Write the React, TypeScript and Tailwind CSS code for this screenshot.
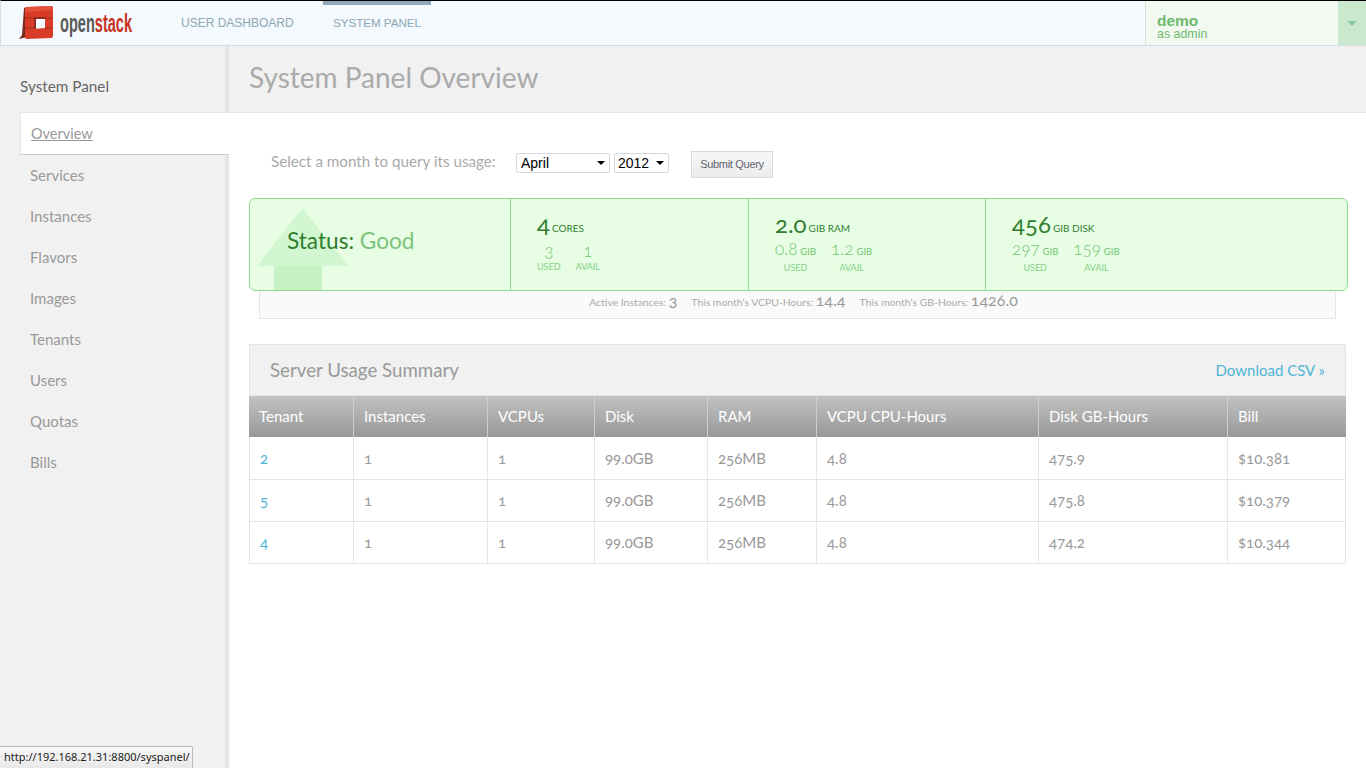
const BODY_FONT = "font-['Lato','Noto_Sans',sans-serif]";

const NAV_ITEMS = ["Services", "Instances", "Flavors", "Images", "Tenants", "Users", "Quotas", "Bills"];

const COLUMNS = [
  { label: "Tenant", width: "w-[104px]" },
  { label: "Instances", width: "w-[134px]" },
  { label: "VCPUs", width: "w-[107px]" },
  { label: "Disk", width: "w-[113px]" },
  { label: "RAM", width: "w-[109px]" },
  { label: "VCPU CPU-Hours", width: "w-[222px]" },
  { label: "Disk GB-Hours", width: "w-[189px]" },
  { label: "Bill", width: "w-[119px]" },
];

const ROWS = [
  ["2", "1", "1", "99.0GB", "256MB", "4.8", "475.9", "$10.381"],
  ["5", "1", "1", "99.0GB", "256MB", "4.8", "475.8", "$10.379"],
  ["4", "1", "1", "99.0GB", "256MB", "4.8", "474.2", "$10.344"],
];

function Logo() {
  return (
    <div className="flex items-center">
      <svg width="38" height="36" viewBox="0 1 38 36" className="shrink-0">
        {/* dark side of the cube */}
        <path d="M6 4 L9 3 L9 33 L1 35 L4 31 Z" fill="#7a2b20" />
        {/* front face with square hole */}
        <path fillRule="evenodd" d="M7 5 Q7 3 9 3 L33 2 Q35 2 35 4 L35 32 Q35 34 33 34 L9 35 Q7 35 7 33 Z M16 13 L16 25 L27 24 L27 13 Z" fill="#d83b27" />
        <path d="M7 5 Q7 3 9 3 L33 2 Q35 2 35 4 L35 6 L7 8 Z" fill="#e4503c" />
        {/* inner depth of the hole */}
        <path d="M16 13 L27 13 L27 15 L18 15 L18 25 L16 25 Z" fill="#8f2a1c" />
        {/* seams */}
        <path d="M7 14 L16 14 M27 14 L35 14 M7 24 L16 24 M27 24 L35 24" stroke="#9b2a1b" strokeWidth="1" />
      </svg>
      <span className="ml-[4px] inline-block origin-left scale-x-[0.56] font-['Liberation_Sans',sans-serif] text-[26px] leading-none font-bold whitespace-nowrap">
        <span className="text-[#5a5a5a]">open</span>
        <span className="text-[#c8321f]">stack</span>
      </span>
    </div>
  );
}

function Header() {
  return (
    <header className="flex h-[46px] border-t border-b border-l border-t-black border-b-[#cfdde6] border-l-[#cfdde6] bg-[#f3f9fd] font-['Liberation_Sans',sans-serif]">
      <div className="flex w-[180px] shrink-0 items-center pl-[17px]">
        <Logo />
      </div>
      <nav className="flex flex-1 text-[12px] text-[#8ea7b5]">
        <a className="flex w-[142px] items-center">USER DASHBOARD</a>
        <a className="flex w-[108px] items-center justify-center border-t-[4px] border-[#8faab8] pb-[4px] text-[11.6px]">SYSTEM PANEL</a>
      </nav>
      <div className="flex w-[221px] shrink-0 border-l border-[#d5e0dc] bg-[#f2f9f1]">
        <div className="flex-1 pt-[13px] pl-[11px] text-[#6fb96f]">
          <div className="text-[15.5px] leading-[14px] font-bold">demo</div>
          <div className="text-[12.4px] leading-[13px]">as admin</div>
        </div>
        <div className="flex w-[28px] items-center justify-center bg-[#c9e8ce]">
          <span className="h-0 w-0 border-x-[5px] border-t-[5px] border-x-transparent border-t-[#8fc495]" />
        </div>
      </div>
    </header>
  );
}

function Sidebar() {
  return (
    <aside className={`relative z-10 w-[225px] shrink-0 bg-[#f1f1f1] ${BODY_FONT}`}>
      <h4 className="pt-[30px] pl-[20px] text-[15.3px] leading-[20px] text-[#666666]">System Panel</h4>
      <ul className="mt-[16px] text-[15px] text-[#999999]">
        <li className="-mr-[4px] ml-[20px] flex h-[43px] items-center border-t border-b border-l border-t-[#e5e5e5] border-b-[#cccccc] border-l-[#e5e5e5] bg-white pl-[10px]">
          <a className="text-[14.5px] underline">Overview</a>
        </li>
        {NAV_ITEMS.map((item) => (
          <li key={item} className="flex h-[41px] items-center pl-[30px]">
            <a>{item}</a>
          </li>
        ))}
      </ul>
    </aside>
  );
}

function QueryForm() {
  return (
    <form className="flex items-start pt-[38px] pl-[42px]">
      <label className="w-[245px] text-[15.2px] leading-[20px] text-[#aaaaaa]">Select a month to query its usage:</label>
      <div className="relative mt-[2px] flex h-[20px] w-[94px] items-center rounded-[2px] border border-[#d5dae0] bg-white pl-[4px] font-['Liberation_Sans',sans-serif] text-[14px] text-black">
        April
        <span className="absolute top-[7px] right-[4px] h-0 w-0 border-x-[4px] border-t-[4px] border-x-transparent border-t-black" />
      </div>
      <div className="relative mt-[2px] ml-[4px] flex h-[20px] w-[55px] items-center rounded-[2px] border border-[#d5dae0] bg-white pl-[3px] font-['Liberation_Sans',sans-serif] text-[14px] text-black">
        2012
        <span className="absolute top-[7px] right-[4px] h-0 w-0 border-x-[4px] border-t-[4px] border-x-transparent border-t-black" />
      </div>
      <button type="button" className="ml-[22px] h-[27px] w-[82px] border border-[#d9d9d9] bg-gradient-to-b from-[#f7f7f7] to-[#ececec] font-['Liberation_Sans',sans-serif] text-[11px] tracking-[-0.3px] text-[#5f5f6f]">
        Submit Query
      </button>
    </form>
  );
}

function Stat({ value, unit, label }: { value: string; unit?: string; label: string }) {
  return (
    <div className="flex flex-col items-center">
      <div className="text-[17px] leading-[19px] font-light text-[#6fc46f] oldstyle-nums">
        {value}
        {unit && <span className="ml-[3px] text-[9.5px] font-normal">{unit}</span>}
      </div>
      <div className="text-[9px] leading-[13px] text-[#86cf86]">{label}</div>
    </div>
  );
}

function StatCell({ total, unit, used, avail, unitSmall, width, gap }: { total: string; unit: string; used: string; avail: string; unitSmall?: string; width: string; gap: string }) {
  return (
    <div className={`${width} shrink-0 border-l border-[#8fdc8f] pt-[11px] pl-[26px]`}>
      <div className="flex items-baseline text-[#2f7d2f]">
        <span className="text-[24px] leading-[28px] oldstyle-nums">{total}</span>
        <span className="ml-[2px] -translate-y-px text-[10px]">{unit}</span>
      </div>
      <div className={`flex ${gap}`}>
        <Stat value={used} unit={unitSmall} label="USED" />
        <Stat value={avail} unit={unitSmall} label="AVAIL" />
      </div>
    </div>
  );
}

function StatusBar() {
  return (
    <section className="mt-[20px] ml-[20px] w-[1099px]">
      <div className="relative flex h-[93px] overflow-hidden rounded-[6px] border border-[#8fdc8f] bg-[#e7fde4]">
        <svg width="91" height="82" viewBox="0 0 91 82" className="absolute bottom-0 left-[7px]">
          <path d="M45.5 0 L91 58 L0 58 Z" fill="#d2f6cf" />
          <rect x="17" y="58" width="48" height="24" fill="#c4f2c3" />
        </svg>
        <div className="relative w-[260px] shrink-0 pt-[27px] pl-[37px] text-[22.6px] leading-[30px] text-[#2f7d2f]">
          Status: <span className="text-[#7cc47c]">Good</span>
        </div>
        <StatCell width="w-[238px]" gap="mt-[3px] gap-[15px]" total="4" unit="CORES" used="3" avail="1" />
        <StatCell width="w-[237px]" gap="mt-[1px] gap-[15px]" total="2.0" unit="GIB RAM" used="0.8" avail="1.2" unitSmall="GIB" />
        <StatCell width="flex-1" gap="mt-[1px] gap-[15px]" total="456" unit="GIB DISK" used="297" avail="159" unitSmall="GIB" />
      </div>
      <div className="ml-[10px] flex h-[28px] w-[1077px] items-center justify-center gap-[14px] border-x border-b border-[#e5e5e5] bg-[#fafafa] pb-[10px] pl-[12px] text-[10.4px] text-[#aaaaaa]">
        <span>Active Instances: <span className="text-[16px] text-[#999999] oldstyle-nums">3</span></span>
        <span>This month's VCPU-Hours: <span className="text-[16px] text-[#999999] oldstyle-nums">14.4</span></span>
        <span>This month's GB-Hours: <span className="text-[16px] text-[#999999] oldstyle-nums">1426.0</span></span>
      </div>
    </section>
  );
}

function UsageTable() {
  return (
    <section className="mt-[25px] ml-[20px] w-[1097px]">
      <div className="flex h-[52px] items-center justify-between border border-[#e5e5e5] bg-[#f1f1f1] px-[20px]">
        <h3 className="text-[18.7px] text-[#999999]">Server Usage Summary</h3>
        <a className="text-[15px] text-[#4fb5d5]">Download CSV »</a>
      </div>
      <table className="w-full table-fixed border-separate border-spacing-0">
        <thead>
          <tr className="h-[41px] bg-gradient-to-b from-[#c2c2c2] to-[#989898] text-left text-[15px] text-white">
            {COLUMNS.map((col, i) => (
              <th key={col.label} className={`${col.width} pl-[10px] font-normal ${i > 0 ? "border-l border-[#cfcfcf]" : ""}`}>
                {col.label}
              </th>
            ))}
          </tr>
        </thead>
        <tbody>
          {ROWS.map((row, r) => (
            <tr key={row[0]} className={r === 0 ? "h-[43px]" : "h-[42px]"}>
              {row.map((cell, i) => (
                <td key={i} className={`border-b border-l border-[#e5e5e5] pl-[10px] text-[15px] oldstyle-nums ${r === 0 ? "pt-[1px]" : ""} ${i === 7 ? "border-r" : ""} ${i === 0 ? "text-[#4fb5d5]" : "text-[#999999]"}`}>
                  {cell}
                </td>
              ))}
            </tr>
          ))}
        </tbody>
      </table>
    </section>
  );
}

export default function App() {
  return (
    <div className="relative h-[768px] overflow-hidden bg-white">
      <Header />
      <div className="flex h-[722px]">
        <Sidebar />
        <div className="w-[4px] shrink-0 bg-[#e5e5e5]" />
        <main className={`flex-1 ${BODY_FONT}`}>
          <div className="flex h-[67px] items-center border-b border-[#e5e5e5] bg-[#f1f1f1] pb-[4px] pl-[20px]">
            <h2 className="text-[28px] text-[#aaaaaa]">System Panel Overview</h2>
          </div>
          <QueryForm />
          <StatusBar />
          <UsageTable />
        </main>
      </div>
      {/* Browser link status bubble */}
      <div className="absolute bottom-0 left-0 z-20 flex h-[22px] w-[193px] items-center rounded-tr-[2px] border-t border-r border-[#bbbbbb] bg-gradient-to-b from-[#f7f7f7] to-[#e9e9e9] pl-[4px] font-['Noto_Sans',sans-serif] text-[11px] whitespace-nowrap text-[#222222]">
        http://192.168.21.31:8800/syspanel/
      </div>
    </div>
  );
}
